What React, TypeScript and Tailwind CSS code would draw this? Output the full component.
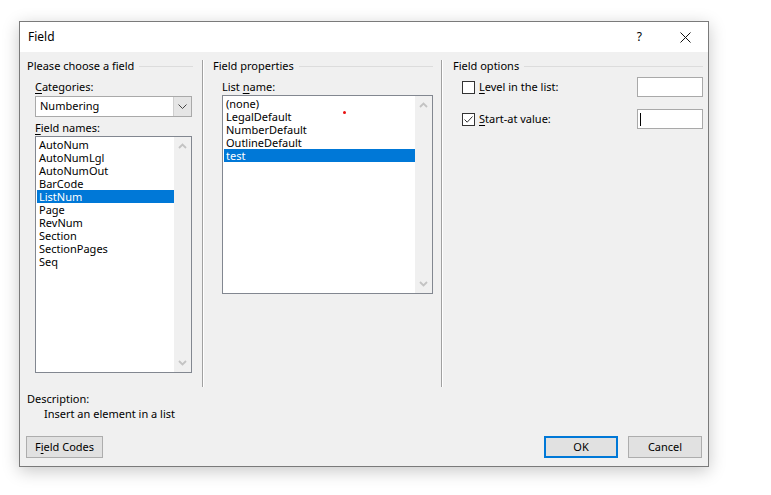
import React from 'react';

const font = { fontFamily: '"Segoe UI", "Noto Sans", "Open Sans", sans-serif' };

function U({ children }: { children: React.ReactNode }) {
  return <span className="underline underline-offset-[2px]">{children}</span>;
}

function Heading({ text, lineRight }: { text: string; lineRight: number }) {
  return (
    <div className="flex items-center h-[15px]" style={{ marginRight: lineRight }}>
      <span className="whitespace-nowrap">{text}</span>
      <div className="flex-1 h-px bg-[#dcdcdc] ml-[5px]" />
    </div>
  );
}

function ScrollArrow({ up }: { up?: boolean }) {
  return (
    <svg width="9" height="6" viewBox="0 0 9 6">
      <path
        d={up ? 'M1 5 L4.5 1.5 L8 5' : 'M1 1 L4.5 4.5 L8 1'}
        fill="none"
        stroke="#c3c3c3"
        strokeWidth="1.8"
      />
    </svg>
  );
}

function ListBox({
  items,
  selected,
  className,
}: {
  items: string[];
  selected: string;
  className: string;
}) {
  return (
    <div className={`flex border border-[#828790] bg-white ${className}`}>
      <div className="flex-1 pt-[1px] pl-[1px]">
        {items.map((it) => (
          <div
            key={it}
            className={`h-[13px] leading-[13px] pl-[2px] ${
              it === selected ? 'bg-[#0078d7] text-white' : 'text-black'
            }`}
          >
            {it}
          </div>
        ))}
      </div>
      <div className="w-[17px] bg-[#f0f0f0] flex flex-col items-center justify-between pt-[6px] pb-[6px]">
        <ScrollArrow up />
        <ScrollArrow />
      </div>
    </div>
  );
}

function CheckBox({ checked }: { checked?: boolean }) {
  return (
    <div className="w-[13px] h-[13px] border border-[#333] bg-white flex items-center justify-center">
      {checked && (
        <svg width="11" height="11" viewBox="0 0 11 11">
          <path d="M1.5 5.5 L4.2 8.2 L9.5 2.5" fill="none" stroke="#333" strokeWidth="1" />
        </svg>
      )}
    </div>
  );
}

function Button({
  children,
  primary,
  className,
}: {
  children: React.ReactNode;
  primary?: boolean;
  className: string;
}) {
  return (
    <div
      className={`h-[22px] flex items-center justify-center bg-[#e1e1e1] ${
        primary ? 'border-2 border-[#0078d7]' : 'border border-[#adadad]'
      } ${className}`}
    >
      {children}
    </div>
  );
}

export default function App() {
  const fieldNames = [
    'AutoNum',
    'AutoNumLgl',
    'AutoNumOut',
    'BarCode',
    'ListNum',
    'Page',
    'RevNum',
    'Section',
    'SectionPages',
    'Seq',
  ];
  const listNames = ['(none)', 'LegalDefault', 'NumberDefault', 'OutlineDefault', 'test'];

  return (
    <div className="w-[771px] h-[495px] bg-white pt-[21px] pl-[19px] text-[11px] text-black" style={font}>
      <div className="w-[690px] h-[446px] border border-[#7a7a7a] flex flex-col shadow-[0_4px_16px_rgba(0,0,0,0.22)]">
        {/* title bar */}
        <div className="h-[30px] bg-white flex items-center shrink-0">
          <span className="ml-[8px] text-[12px]">Field</span>
          <span className="ml-auto text-[12px] mr-[38px]">?</span>
          <svg width="11" height="11" viewBox="0 0 11 11" className="mr-[17px]">
            <path d="M0.5 0.5 L10.5 10.5 M10.5 0.5 L0.5 10.5" stroke="#111" strokeWidth="1" />
          </svg>
        </div>

        <div className="flex-1 bg-[#f0f0f0] flex flex-col">
          {/* groups */}
          <div className="flex h-[335px] pt-[7px]">
            <div className="w-[182px] pl-[7px]">
              <Heading text="Please choose a field" lineRight={9} />
              <div className="ml-[8px] mt-[5px] leading-[15px]">
                <U>C</U>ategories:
              </div>
              <div className="ml-[8px] mt-[2px] w-[157px] h-[21px] border border-[#a9a9a9] bg-white flex">
                <div className="flex-1 pl-[4px] flex items-center">Numbering</div>
                <div className="w-[18px] bg-[#e5e5e5] border-l border-[#cfcfcf] flex items-center justify-center">
                  <svg width="9" height="5" viewBox="0 0 9 5">
                    <path d="M0.5 0.5 L4.5 4.5 L8.5 0.5" fill="none" stroke="#444" strokeWidth="1" />
                  </svg>
                </div>
              </div>
              <div className="ml-[8px] mt-[3px] leading-[15px]">
                <U>F</U>ield names:
              </div>
              <ListBox items={fieldNames} selected="ListNum" className="ml-[8px] mt-[1px] w-[157px] h-[237px]" />
            </div>

            <div className="w-[2px] h-[327px] mt-[1px] border-l border-[#a0a0a0] border-r border-r-white" />

            <div className="w-[237px] pl-[9px] relative">
              <Heading text="Field properties" lineRight={8} />
              <div className="ml-[9px] mt-[5px] leading-[15px]">
                List <U>n</U>ame:
              </div>
              <ListBox items={listNames} selected="test" className="ml-[9px] mt-[1px] w-[211px] h-[199px]" />
              <div className="absolute left-[139px] top-[52px] w-[3px] h-[3px] rounded-full bg-[#e81010]" />
            </div>

            <div className="w-[2px] h-[327px] mt-[1px] border-l border-[#a0a0a0] border-r border-r-white" />

            <div className="flex-1 pl-[10px]">
              <Heading text="Field options" lineRight={5} />
              <div className="flex items-center ml-[9px] mt-[3px] h-[20px]">
                <CheckBox />
                <span className="ml-[4px]">
                  <U>L</U>evel in the list:
                </span>
                <div className="ml-auto mr-[5px] w-[66px] h-[20px] border border-[#a9a9a9] bg-white" />
              </div>
              <div className="flex items-center ml-[9px] mt-[12px] h-[20px]">
                <CheckBox checked />
                <span className="ml-[4px]">
                  <U>S</U>tart-at value:
                </span>
                <div className="ml-auto mr-[5px] w-[66px] h-[20px] border border-[#a9a9a9] bg-white flex items-center pl-[2px]">
                  <div className="w-px h-[13px] bg-black" />
                </div>
              </div>
            </div>
          </div>

          {/* description */}
          <div className="pl-[7px] mt-[4px] leading-[15px]">Description:</div>
          <div className="pl-[24px] leading-[15px]">Insert an element in a list</div>

          {/* buttons */}
          <div className="flex mt-[15px] px-[6px]">
            <Button className="w-[77px]">
              <span>
                F<U>i</U>eld Codes
              </span>
            </Button>
            <Button primary className="w-[74px] ml-auto">
              OK
            </Button>
            <Button className="w-[74px] ml-[10px]">Cancel</Button>
          </div>
        </div>
      </div>
    </div>
  );
}
